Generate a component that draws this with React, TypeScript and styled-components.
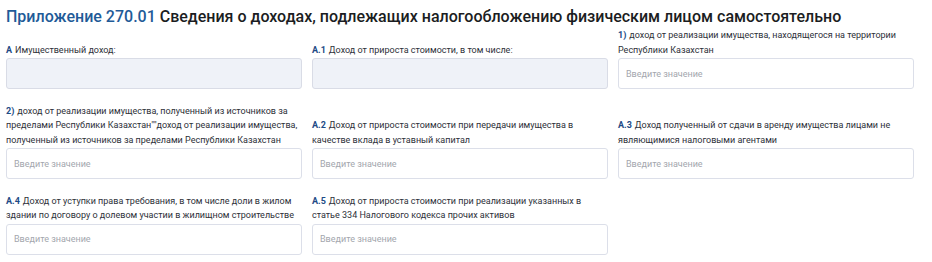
import * as React from 'react';
import styled, { createGlobalStyle } from 'styled-components';

const GlobalStyle = createGlobalStyle`
  html, body {
    margin: 0;
    padding: 0;
    background: #ffffff;
  }
  body {
    font-family: Roboto, "Noto Sans", "Liberation Sans", sans-serif;
  }
`;

const Page = styled.div`
  width: 932px;
  padding: 6px 16px 0 6px;
  box-sizing: border-box;
`;

const Title = styled.h1`
  margin: 0;
  font-size: 16px;
  line-height: 22px;
  font-weight: 500;
  color: #1b1d22;
  white-space: nowrap;
`;

const TitleCode = styled.span`
  color: #1f5b98;
`;

const Grid = styled.div`
  display: grid;
  grid-template-columns: repeat(3, 296px);
  column-gap: 10px;
  row-gap: 14.5px;
  align-items: end;
`;

const Field = styled.div`
  display: flex;
  flex-direction: column;
`;

const Label = styled.label`
  font-size: 9px;
  line-height: 14.5px;
  color: #2d3038;
  margin-bottom: 1px;
`;

const Code = styled.b`
  color: #1d4b86;
  font-weight: 700;
  margin-right: 3px;
`;

const Input = styled.input`
  box-sizing: border-box;
  height: 31px;
  width: 100%;
  margin: 0;
  padding: 0 7px;
  border: 1px solid #dcdfe9;
  border-radius: 3px;
  background: #ffffff;
  font-family: inherit;
  font-size: 9px;
  color: #333;
  outline: none;

  &::placeholder {
    color: #a3a6ad;
  }

  &:disabled {
    background: #eff2f8;
    border-color: #d9dce6;
  }
`;

type Item = { code: string; text: string; disabled?: boolean };

const items: Item[] = [
  { code: 'А', text: 'Имущественный доход:', disabled: true },
  { code: 'А.1', text: 'Доход от прироста стоимости, в том числе:', disabled: true },
  { code: '1)', text: 'доход от реализации имущества, находящегося на территории Республики Казахстан' },
  {
    code: '2)',
    text:
      'доход от реализации имущества, полученный из источников за пределами Республики Казахстан""доход от реализации имущества, полученный из источников за пределами Республики Казахстан',
  },
  { code: 'А.2', text: 'Доход от прироста стоимости при передачи имущества в качестве вклада в уставный капитал' },
  { code: 'А.3', text: 'Доход полученный от сдачи в аренду имущества лицами не являющимися налоговыми агентами' },
  {
    code: 'А.4',
    text: 'Доход от уступки права требования, в том числе доли в жилом здании по договору о долевом участии в жилищном строительстве',
  },
  {
    code: 'А.5',
    text: 'Доход от прироста стоимости при реализации указанных в статье 334 Налогового кодекса прочих активов',
  },
];

const App = () => (
  <Page>
    <GlobalStyle />
    <Title>
      <TitleCode>Приложение 270.01</TitleCode> Сведения о доходах, подлежащих налогообложению физическим лицом
      самостоятельно
    </Title>
    <Grid>
      {items.map((item) => (
        <Field key={item.code}>
          <Label>
            <Code>{item.code}</Code>
            {item.text}
          </Label>
          <Input disabled={item.disabled} placeholder={item.disabled ? '' : 'Введите значение'} />
        </Field>
      ))}
    </Grid>
  </Page>
);

export default App;
